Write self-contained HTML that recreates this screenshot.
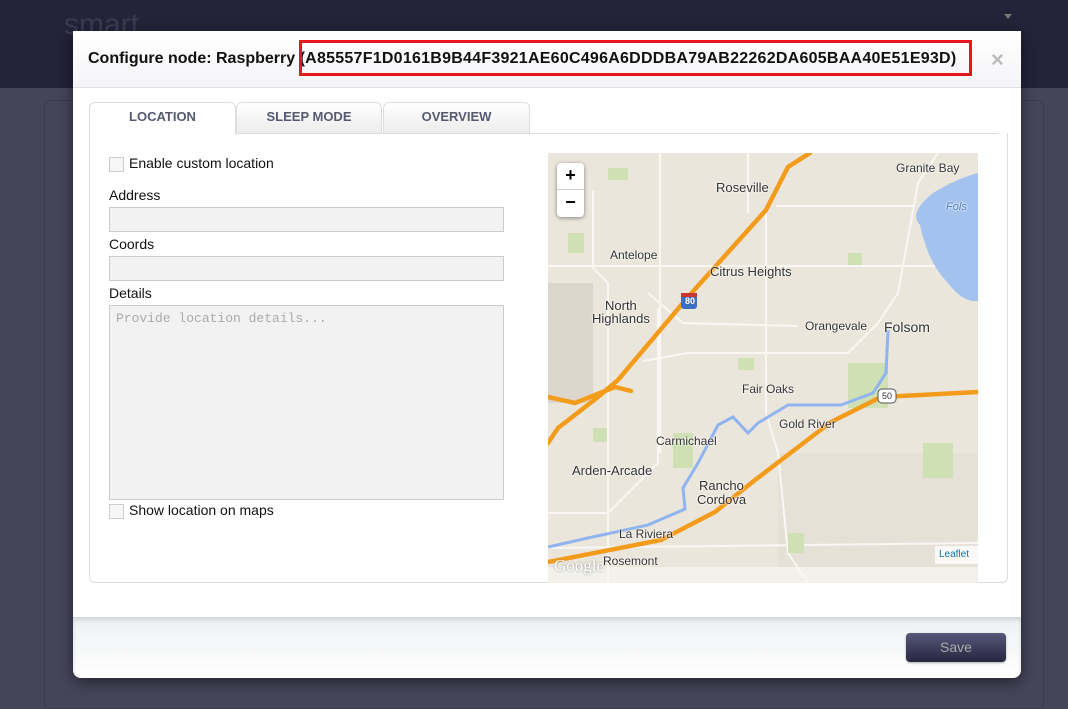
<!DOCTYPE html>
<html><head><meta charset="utf-8"><style>
*{box-sizing:border-box;margin:0;padding:0}
body{width:1068px;height:709px;overflow:hidden;background:#45455a;font-family:"Liberation Sans",Arial,sans-serif;position:relative}
.abs{position:absolute}
.top{left:0;top:0;width:1068px;height:88px;background:#232339}
.modal{left:73px;top:31px;width:948px;height:647px;background:#fff;border-radius:0 0 8px 8px;box-shadow:0 4px 14px rgba(0,0,0,.5);overflow:hidden}
.hdr{left:0;top:0;width:948px;height:57px;background:linear-gradient(#fff,#f3f4f6);border-bottom:1px solid #e0e0e0}
.title{left:15px;top:19px;font-size:16px;font-weight:bold;color:#111;white-space:nowrap}
.title span{letter-spacing:0.25px}
.redbox{left:226px;top:9px;width:673px;height:36px;border:3px solid #e8151f}
.close{left:918px;top:16px;font-size:22px;color:#bbb;font-weight:bold}
.footer{left:0;top:586px;width:948px;height:61px;background:linear-gradient(#eef0f2,#fff);box-shadow:inset 0 3px 4px rgba(0,0,0,.12)}
.save{left:833px;top:16px;width:100px;height:29px;border-radius:4px;background:linear-gradient(#575878,#262641);color:#aaa;font-size:14px;text-align:center;line-height:29px;box-shadow:0 1px 2px rgba(0,0,0,.3)}
.panel{left:16px;top:102px;width:919px;height:450px;border:1px solid #ddd;border-top:none;border-radius:0 0 6px 6px}
.tab{top:71px;height:32px;border:1px solid #ddd;border-radius:6px 6px 0 0;background:linear-gradient(#fff,#ececec);font-size:13px;font-weight:bold;color:#555a70;text-align:center;line-height:28px}
.tab.act{background:#fff;border-bottom:1px solid #fff;height:33px}
.lbl{font-size:14px;color:#111}
.inp{left:36px;width:395px;background:#f2f2f2;border:1px solid #ccc}
.cb{width:15px;height:15px;border:1px solid #ccc;background:#f6f6f6}
.ml{font-size:12px;color:#333;white-space:nowrap;text-shadow:0 0 2px #fff,0 0 2px #fff}
</style></head><body>
<div class="abs top"></div>
<div class="abs" style="left:64px;top:8px;font-size:30px;color:#3a3a52">smart</div>
<div class="abs" style="left:44px;top:100px;width:1000px;height:609px;border:1px solid #3b3b50;border-radius:6px"></div>
<div class="abs" style="left:1004px;top:14px;border-left:4px solid transparent;border-right:4px solid transparent;border-top:5px solid #777"></div>

<div class="abs modal">
  <div class="abs hdr"></div>
  <div class="abs title">Configure node: Raspberry <span>(A85557F1D0161B9B44F3921AE60C496A6DDDBA79AB22262DA605BAA40E51E93D)</span></div>
  <div class="abs redbox"></div>
  <div class="abs close">×</div>

  <div class="abs" style="left:16px;top:102px;width:910px;border-top:1px solid #ddd"></div>
  <div class="abs tab act" style="left:16px;width:147px">LOCATION</div>
  <div class="abs tab" style="left:163px;width:146px">SLEEP MODE</div>
  <div class="abs tab" style="left:310px;width:147px">OVERVIEW</div>
  <div class="abs panel"></div>

  <div class="abs cb" style="left:36px;top:126px"></div>
  <div class="abs lbl" style="left:56px;top:124px">Enable custom location</div>
  <div class="abs lbl" style="left:36px;top:156px">Address</div>
  <div class="abs inp" style="top:176px;height:25px"></div>
  <div class="abs lbl" style="left:36px;top:205px">Coords</div>
  <div class="abs inp" style="top:225px;height:25px"></div>
  <div class="abs lbl" style="left:36px;top:254px">Details</div>
  <div class="abs inp" style="top:274px;height:195px;font-family:'Liberation Mono',monospace;font-size:13px;color:#aaa;padding:5px 6px">Provide location details...</div>
  <div class="abs cb" style="left:36px;top:473px"></div>
  <div class="abs lbl" style="left:56px;top:471px">Show location on maps</div>

  <div class="abs footer"><div class="abs save">Save</div></div>
</div>

<div class="abs" style="left:548px;top:153px;width:430px;height:430px;overflow:hidden;background:#ece7dd">
<svg width="430" height="430" style="position:absolute;left:0;top:0">
  <rect x="0" y="0" width="430" height="430" fill="#ebe6dc"/>
  <rect x="230" y="300" width="200" height="130" fill="#e6e1d7"/>
  <rect x="0" y="130" width="45" height="120" fill="#dcd6cc"/>
  <rect x="0" y="414" width="430" height="16" fill="#f2f1ec"/>
  <g stroke="#f8f7f3" stroke-width="2" fill="none">
    <path d="M45 38 L45 115 L60 130 L60 430"/>
    <path d="M0 113 L430 113"/>
    <path d="M100 140 L135 170 L250 173"/>
    <path d="M95 208 L140 200 L300 200 L330 170 L350 140 L370 30 L390 0"/>
    <path d="M110 155 L110 310 L60 360 L0 360"/>
    <path d="M112 0 L112 300 M200 0 L200 60 M218 57 L218 260 L230 300 L240 400 L260 430"/>
    <path d="M228 53 L367 53"/>
    <path d="M0 395 L430 390"/>
  </g>
  <g fill="#cfe0b4">
    <rect x="20" y="80" width="16" height="20"/><rect x="60" y="15" width="20" height="12"/>
    <rect x="300" y="100" width="14" height="12"/><rect x="190" y="205" width="16" height="12"/>
    <rect x="125" y="280" width="20" height="35"/><rect x="300" y="210" width="40" height="45"/>
    <rect x="375" y="290" width="30" height="35"/><rect x="45" y="275" width="14" height="14"/>
    <rect x="240" y="380" width="16" height="20"/><rect x="400" y="30" width="30" height="70"/>
  </g>
  <path d="M372 72 Q360 60 385 40 Q410 25 430 20 L430 148 Q415 150 400 130 Q380 110 372 72Z" fill="#a4c2ee"/>
  <path d="M340 177 L338 220 L325 240 L293 252 L240 252 L210 270 L200 280 L185 264 L170 272 L150 310 L135 335 L137 356 L100 372 L40 385 L0 394" stroke="#8fb4f0" stroke-width="3" fill="none"/>
  <g stroke="#f39c1c" stroke-width="4.5" fill="none" stroke-linecap="round">
    <path d="M262 0 L240 14 L218 57 L140 144 L70 227 L50 244 L10 275 L0 290"/>
    <path d="M0 244 L27 250 L67 234 L83 238"/>
    <path d="M0 409 L113 387 L167 359 L207 327 L283 269 L333 244 L430 239"/>
  </g>
  <rect x="133" y="142" width="16" height="14" rx="3" fill="#3b6fc4"/><rect x="133" y="140" width="16" height="4" fill="#c33"/>
  <rect x="330" y="236" width="18" height="14" rx="4" fill="#fff" stroke="#555"/>
</svg>
<div class="abs" style="left:137px;top:143px;font-size:9px;color:#fff;font-weight:bold">80</div>
<div class="abs" style="left:334px;top:238px;font-size:9px;color:#333">50</div>
<div class="abs ml" style="left:348px;top:8px">Granite Bay</div>
<div class="abs ml" style="left:168px;top:27px;font-size:13px">Roseville</div>
<div class="abs ml" style="left:62px;top:95px">Antelope</div>
<div class="abs ml" style="left:162px;top:111px;font-size:13px">Citrus Heights</div>
<div class="abs ml" style="left:57px;top:145px;font-size:13px">North</div>
<div class="abs ml" style="left:44px;top:158px;font-size:13px">Highlands</div>
<div class="abs ml" style="left:257px;top:166px">Orangevale</div>
<div class="abs ml" style="left:336px;top:166px;font-size:14px">Folsom</div>
<div class="abs ml" style="left:194px;top:229px">Fair Oaks</div>
<div class="abs ml" style="left:231px;top:264px">Gold River</div>
<div class="abs ml" style="left:108px;top:281px">Carmichael</div>
<div class="abs ml" style="left:24px;top:310px;font-size:13px">Arden-Arcade</div>
<div class="abs ml" style="left:151px;top:325px;font-size:13px">Rancho</div>
<div class="abs ml" style="left:149px;top:339px;font-size:13px">Cordova</div>
<div class="abs ml" style="left:71px;top:374px">La Riviera</div>
<div class="abs ml" style="left:55px;top:401px">Rosemont</div>
<div class="abs ml" style="left:398px;top:48px;font-size:11px;color:#4a7cc7;font-style:italic">Fols</div>
<div class="abs" style="left:6px;top:403px;font-size:17px;color:#fff;font-family:'Liberation Serif',serif;text-shadow:0 0 2px #888">Google</div>
<div class="abs" style="left:387px;top:393px;width:43px;height:18px;background:rgba(255,255,255,.8);font-size:10px;color:#0078a8;padding:3px 4px">Leaflet</div>
<div class="abs" style="left:9px;top:10px;width:27px;height:54px;background:#fff;border-radius:4px;box-shadow:0 1px 4px rgba(0,0,0,.45)">
  <div style="height:27px;border-bottom:1px solid #ccc;text-align:center;font:bold 18px 'Liberation Sans';line-height:25px;color:#000">+</div>
  <div style="text-align:center;font:bold 18px 'Liberation Sans';line-height:24px;color:#000">−</div>
</div>
</div>
</body></html>
